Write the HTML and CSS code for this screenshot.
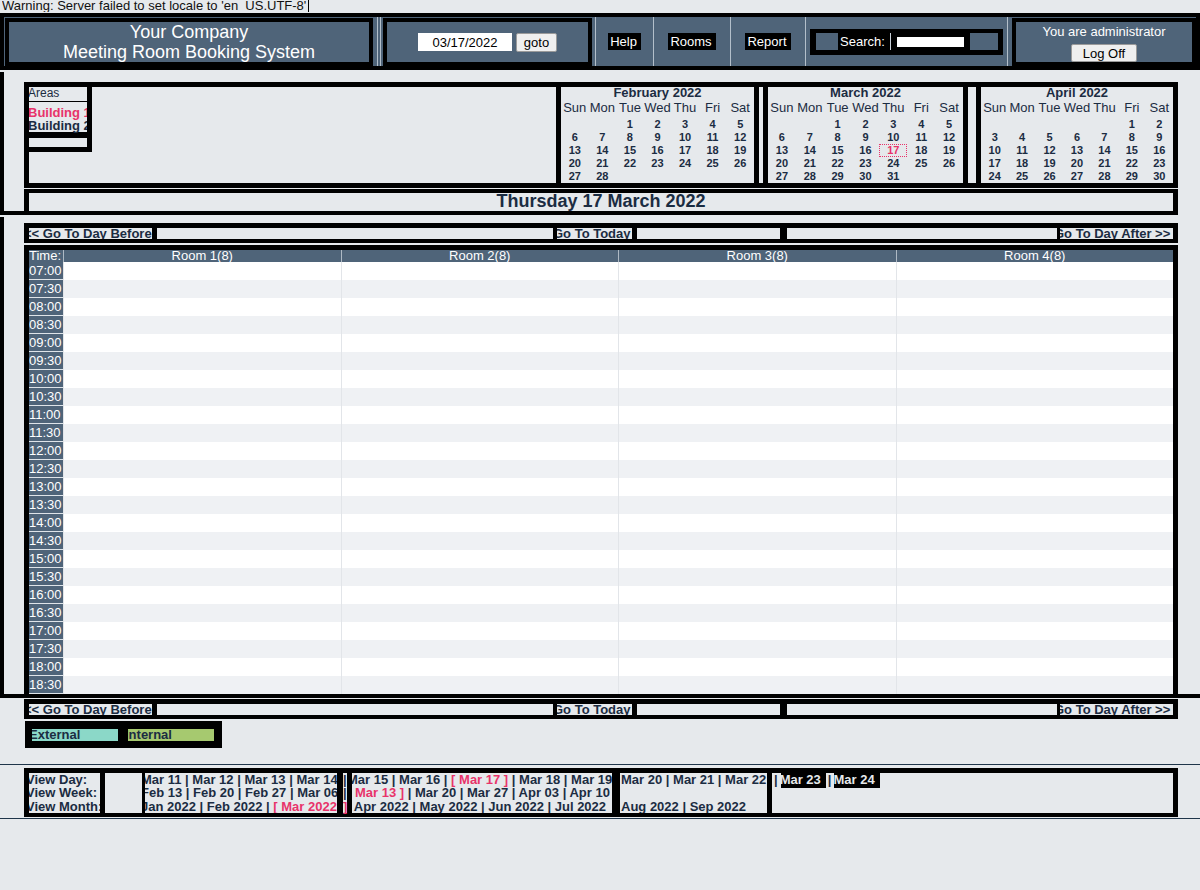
FILE: index.html
```html
<!DOCTYPE html>
<html>
<head>
<meta charset="utf-8">
<title>Meeting Room Booking System</title>
<link rel="stylesheet" href="styles.css">
</head>
<body>
<div class="warning"><span>Warning: Server failed to set locale to 'en_US.UTF-8'</span></div>
<div class="header">
  <div class="h-company"><div class="companybox">Your Company<br>Meeting Room Booking System</div></div>
  <div class="hline"></div><div class="hgap"></div><div class="hline"></div>
  <div class="h-date"><div class="datebox"><input class="dateinput" value="03/17/2022"><button class="btn goto">goto</button></div></div>
  <div class="hline"></div>
  <div class="h-link w57"><span class="navlabel">Help</span></div>
  <div class="hline"></div>
  <div class="h-link w76"><span class="navlabel">Rooms</span></div>
  <div class="hline"></div>
  <div class="h-link w74"><span class="navlabel">Report</span></div>
  <div class="hline"></div>
  <div class="h-search"><div class="searchbox"><span class="sq1"></span><span class="searchlabel">Search:</span><span class="sline"></span><span class="sinput"></span><span class="sq2"></span></div></div>
  <div class="hline"></div>
  <div class="h-admin"><div class="adminbox"><div class="admintext">You are administrator</div><button class="btn logoff">Log Off</button></div></div>
</div>

<div class="sec1">
  <div class="topbox">
    <div class="areas">
      <div class="areas-title">Areas</div>
      <div class="areas-list">
        <div class="area current">Building 1</div>
        <div class="area">Building 2</div>
      </div>
    </div>
    <div class="spacer"></div>
    <div class="cal feb">
      <div class="cal-title">February 2022</div>
      <div class="cal-wd"><span>Sun</span><span>Mon</span><span>Tue</span><span>Wed</span><span>Thu</span><span>Fri</span><span>Sat</span></div>
      <div class="cal-dates">
        <span></span><span></span><span>1</span><span>2</span><span>3</span><span>4</span><span>5</span>
        <span>6</span><span>7</span><span>8</span><span>9</span><span>10</span><span>11</span><span>12</span>
        <span>13</span><span>14</span><span>15</span><span>16</span><span>17</span><span>18</span><span>19</span>
        <span>20</span><span>21</span><span>22</span><span>23</span><span>24</span><span>25</span><span>26</span>
        <span>27</span><span>28</span>
      </div>
    </div>
    <div class="cal mar">
      <div class="cal-title">March 2022</div>
      <div class="cal-wd"><span>Sun</span><span>Mon</span><span>Tue</span><span>Wed</span><span>Thu</span><span>Fri</span><span>Sat</span></div>
      <div class="cal-dates">
        <span></span><span></span><span>1</span><span>2</span><span>3</span><span>4</span><span>5</span>
        <span>6</span><span>7</span><span>8</span><span>9</span><span>10</span><span>11</span><span>12</span>
        <span>13</span><span>14</span><span>15</span><span>16</span><span class="today">17</span><span>18</span><span>19</span>
        <span>20</span><span>21</span><span>22</span><span>23</span><span>24</span><span>25</span><span>26</span>
        <span>27</span><span>28</span><span>29</span><span>30</span><span>31</span>
      </div>
    </div>
    <div class="cal apr">
      <div class="cal-title">April 2022</div>
      <div class="cal-wd"><span>Sun</span><span>Mon</span><span>Tue</span><span>Wed</span><span>Thu</span><span>Fri</span><span>Sat</span></div>
      <div class="cal-dates">
        <span></span><span></span><span></span><span></span><span></span><span>1</span><span>2</span>
        <span>3</span><span>4</span><span>5</span><span>6</span><span>7</span><span>8</span><span>9</span>
        <span>10</span><span>11</span><span>12</span><span>13</span><span>14</span><span>15</span><span>16</span>
        <span>17</span><span>18</span><span>19</span><span>20</span><span>21</span><span>22</span><span>23</span>
        <span>24</span><span>25</span><span>26</span><span>27</span><span>28</span><span>29</span><span>30</span>
      </div>
    </div>
  </div>
  <div class="titlebox">Thursday 17 March 2022</div>
</div>

<div class="sec2">
  <div class="nav">
    <div class="nv before">&lt;&lt; Go To Day Before</div>
    <div class="nv fill1"></div>
    <div class="nv today-link">Go To Today</div>
    <div class="nv fill2"></div>
    <div class="nv fill3"></div>
    <div class="nv after">Go To Day After &gt;&gt;</div>
  </div>
  <div class="grid">
    <div class="ghead"><div class="gh time">Time:</div><div class="gh">Room 1(8)</div><div class="gh">Room 2(8)</div><div class="gh">Room 3(8)</div><div class="gh">Room 4(8)</div></div>
    <div class="trow"><div class="tcell">07:00</div><div class="rc"></div><div class="rc"></div><div class="rc"></div><div class="rc"></div></div>
    <div class="trow"><div class="tcell">07:30</div><div class="rc"></div><div class="rc"></div><div class="rc"></div><div class="rc"></div></div>
    <div class="trow"><div class="tcell">08:00</div><div class="rc"></div><div class="rc"></div><div class="rc"></div><div class="rc"></div></div>
    <div class="trow"><div class="tcell">08:30</div><div class="rc"></div><div class="rc"></div><div class="rc"></div><div class="rc"></div></div>
    <div class="trow"><div class="tcell">09:00</div><div class="rc"></div><div class="rc"></div><div class="rc"></div><div class="rc"></div></div>
    <div class="trow"><div class="tcell">09:30</div><div class="rc"></div><div class="rc"></div><div class="rc"></div><div class="rc"></div></div>
    <div class="trow"><div class="tcell">10:00</div><div class="rc"></div><div class="rc"></div><div class="rc"></div><div class="rc"></div></div>
    <div class="trow"><div class="tcell">10:30</div><div class="rc"></div><div class="rc"></div><div class="rc"></div><div class="rc"></div></div>
    <div class="trow"><div class="tcell">11:00</div><div class="rc"></div><div class="rc"></div><div class="rc"></div><div class="rc"></div></div>
    <div class="trow"><div class="tcell">11:30</div><div class="rc"></div><div class="rc"></div><div class="rc"></div><div class="rc"></div></div>
    <div class="trow"><div class="tcell">12:00</div><div class="rc"></div><div class="rc"></div><div class="rc"></div><div class="rc"></div></div>
    <div class="trow"><div class="tcell">12:30</div><div class="rc"></div><div class="rc"></div><div class="rc"></div><div class="rc"></div></div>
    <div class="trow"><div class="tcell">13:00</div><div class="rc"></div><div class="rc"></div><div class="rc"></div><div class="rc"></div></div>
    <div class="trow"><div class="tcell">13:30</div><div class="rc"></div><div class="rc"></div><div class="rc"></div><div class="rc"></div></div>
    <div class="trow"><div class="tcell">14:00</div><div class="rc"></div><div class="rc"></div><div class="rc"></div><div class="rc"></div></div>
    <div class="trow"><div class="tcell">14:30</div><div class="rc"></div><div class="rc"></div><div class="rc"></div><div class="rc"></div></div>
    <div class="trow"><div class="tcell">15:00</div><div class="rc"></div><div class="rc"></div><div class="rc"></div><div class="rc"></div></div>
    <div class="trow"><div class="tcell">15:30</div><div class="rc"></div><div class="rc"></div><div class="rc"></div><div class="rc"></div></div>
    <div class="trow"><div class="tcell">16:00</div><div class="rc"></div><div class="rc"></div><div class="rc"></div><div class="rc"></div></div>
    <div class="trow"><div class="tcell">16:30</div><div class="rc"></div><div class="rc"></div><div class="rc"></div><div class="rc"></div></div>
    <div class="trow"><div class="tcell">17:00</div><div class="rc"></div><div class="rc"></div><div class="rc"></div><div class="rc"></div></div>
    <div class="trow"><div class="tcell">17:30</div><div class="rc"></div><div class="rc"></div><div class="rc"></div><div class="rc"></div></div>
    <div class="trow"><div class="tcell">18:00</div><div class="rc"></div><div class="rc"></div><div class="rc"></div><div class="rc"></div></div>
    <div class="trow"><div class="tcell">18:30</div><div class="rc"></div><div class="rc"></div><div class="rc"></div><div class="rc"></div></div>
  </div>
</div>

<div class="nav nav2">
  <div class="nv before">&lt;&lt; Go To Day Before</div>
  <div class="nv fill1"></div>
  <div class="nv today-link">Go To Today</div>
  <div class="nv fill2"></div>
  <div class="nv fill3"></div>
  <div class="nv after">Go To Day After &gt;&gt;</div>
</div>

<div class="legend">
  <div class="leg ext">External</div>
  <div class="leg int">Internal</div>
</div>

<div class="footer">
  <div class="fbox">
    <div class="fc fa"><div class="l">View Day:</div><div class="l">View Week:</div><div class="l">View Month:</div></div>
    <div class="fc fb"></div>
    <div class="fc fcc"><div class="l">Mar 11 | Mar 12 | Mar 13 | Mar 14</div><div class="l">Feb 13 | Feb 20 | Feb 27 | Mar 06</div><div class="l">Jan 2022 | Feb 2022 | <span class="hl">[ Mar 2022 ]</span></div></div>
    <div class="fc fd"><div class="l">|</div><div class="l">|</div><div class="l hl">]</div></div>
    <div class="fc fe"><div class="l">Mar 15 | Mar 16 | <span class="hl">[ Mar 17 ]</span> | Mar 18 | Mar 19</div><div class="l"><span class="hl">[ Mar 13 ]</span> | Mar 20 | Mar 27 | Apr 03 | Apr 10</div><div class="l">| Apr 2022 | May 2022 | Jun 2022 | Jul 2022</div></div>
    <div class="fc ff"><div class="l">Mar 20 | Mar 21 | Mar 22</div><div class="l">&nbsp;</div><div class="l">Aug 2022 | Sep 2022</div></div>
    <div class="fc fg"><div class="l"><span class="pipe">|</span><span class="dlab">Mar 23</span><span class="pipe">|</span><span class="dlab">Mar 24</span></div></div>
  </div>
</div>
</body>
</html>
```
FILE: styles.css
```css
* { box-sizing: border-box; }
html, body { margin: 0; padding: 0; }
body {
  background: #e6e9ec;
  font-family: "Liberation Sans", Arial, sans-serif;
  color: #1b2c42;
  width: 1200px;
  height: 890px;
  overflow: hidden;
}

/* warning line */
.warning {
  height: 13px;
  line-height: 11px;
  font-size: 13px;
  color: #111;
  padding-left: 2px;
  overflow: hidden;
  white-space: nowrap;
}
.warning span {
  display: inline-block;
  height: 12px;
  overflow: hidden;
  vertical-align: top;
  border-right: 1px solid #000;
  padding-right: 2px;
}

/* header */
.header {
  display: flex;
  height: 57px;
  border: 4px solid #000;
  background: #4f6479;
  color: #fff;
}
.hline { width: 1px; flex: none; background: #b3bfca; }
.hgap { width: 2px; flex: none; }
.h-company { width: 373px; flex: none; padding: 1px 4px 0 1px; display: flex; }
.companybox {
  flex: 1;
  border: 4px solid #000;
  text-align: center;
  font-size: 18px;
  line-height: 20px;
}
.h-date { width: 214px; flex: none; padding: 1px 3px 0 2px; display: flex; }
.datebox {
  flex: 1;
  border: 4px solid #000;
  display: flex;
  align-items: center;
  justify-content: center;
  gap: 4px;
}
.dateinput {
  width: 94px;
  height: 18px;
  border: 0;
  padding: 0;
  margin: 0;
  background: #fff;
  font: 13px "Liberation Sans", Arial, sans-serif;
  color: #000;
  text-align: center;
  outline: none;
}
.btn {
  font-family: "Liberation Sans", Arial, sans-serif;
  font-size: 13px;
  color: #000;
  background: #efefef;
  border: 1px solid #9a9a9a;
  border-radius: 2px;
  padding: 0;
  margin: 0;
}
.goto { width: 41px; height: 19px; }
.h-link { flex: none; display: flex; align-items: center; justify-content: center; }
.w57 { width: 57px; }
.w76 { width: 76px; }
.w74 { width: 74px; }
.navlabel {
  background: #000;
  color: #fff;
  font-size: 13px;
  line-height: 13px;
  padding: 2px 4px 2px 2px;
  white-space: nowrap;
}
.h-search { width: 201px; flex: none; display: flex; align-items: center; padding: 0 4px; }
.searchbox {
  width: 193px;
  height: 26px;
  background: #000;
  display: flex;
  align-items: center;
  padding-left: 6px;
}
.sq1 { width: 22px; height: 17px; background: #4f6479; flex: none; }
.searchlabel { margin-left: 2px; width: 45px; font-size: 13px; line-height: 13px; color: #fff; white-space: nowrap; overflow: hidden; flex: none; }
.sline { margin-left: 5px; width: 1px; height: 17px; background: #c9d1d9; flex: none; }
.sinput { margin-left: 6px; width: 67px; height: 10px; background: #fff; flex: none; }
.sq2 { margin-left: 6px; width: 28px; height: 17px; background: #4f6479; flex: none; }
.h-admin { width: 188px; flex: none; padding: 1px 0 0 4px; display: flex; }
.adminbox {
  flex: 1;
  border: 4px solid #000;
  text-align: center;
  padding-top: 2px;
}
.admintext { font-size: 13px; line-height: 16px; color: #fff; }
.logoff { width: 66px; height: 18px; display: block; margin: 4px auto 0; }

/* section 1: areas + calendars */
.sec1 {
  margin-top: 2px;
  width: 1178px;
  border-left: 4px solid #000;
  border-bottom: 4px solid #000;
  padding: 10px 0 0 20px;
}
.topbox {
  display: flex;
  height: 106px;
  border: 5px solid #000;
}
.areas {
  width: 63px;
  height: 65px;
  flex: none;
  border-right: 5px solid #000;
  border-bottom: 5px solid #000;
  overflow: hidden;
}
.areas-title {
  height: 15px;
  font-size: 12px;
  line-height: 12px;
  border-bottom: 1px solid #000;
  text-indent: -1px;
  white-space: nowrap;
}
.areas-list {
  margin-top: 4px;
  border-bottom: 6px solid #000;
}
.area {
  font-weight: bold;
  font-size: 13px;
  line-height: 13px;
  white-space: nowrap;
  text-indent: -1px;
}
.area.current { color: #e8336a; }
.spacer { flex: 1; }
.cal {
  flex: none;
  height: 96px;
  border-left: 5px solid #000;
  border-right: 5px solid #000;
  overflow: hidden;
}
.cal.feb { width: 203px; margin-right: 4px; }
.cal.mar { width: 205px; margin-right: 8px; }
.cal.apr { width: 197px; border-right: 0; }
.cal-title {
  height: 11px;
  font-weight: bold;
  font-size: 13px;
  line-height: 11px;
  text-align: center;
  white-space: nowrap;
}
.cal-wd {
  display: grid;
  grid-template-columns: repeat(7, 1fr);
  font-size: 13px;
  line-height: 20px;
  height: 20px;
  text-align: center;
  white-space: nowrap;
}
.cal-dates {
  display: grid;
  grid-template-columns: repeat(7, 1fr);
  grid-auto-rows: 13px;
  font-weight: bold;
  font-size: 11px;
  line-height: 13px;
  text-align: center;
}
.cal-dates .today {
  color: #e8336a;
  border: 1px dotted #e8336a;
  line-height: 11px;
}
.titlebox {
  margin-top: 1px;
  height: 22px;
  border: solid #000;
  border-width: 4px 5px 0;
  text-align: center;
  font-weight: bold;
  font-size: 18px;
  line-height: 17px;
}

/* section 2: day grid */
.sec2 {
  margin-top: 2px;
  border-left: 4px solid #000;
  border-bottom: 4px solid #000;
  padding: 6px 0 0 20px;
}
.nav {
  width: 1154px;
  height: 20px;
  background: #000;
  padding: 5px 5px 4px;
  display: flex;
  font-weight: bold;
  font-size: 13px;
  line-height: 11px;
}
.nav2 { margin-left: 24px; margin-top: 1px; }
.nv {
  background: #e6e9ec;
  height: 11px;
  overflow: hidden;
  white-space: nowrap;
  flex: none;
}
.nv.before { width: 123px; text-indent: -5px; }
.nv.fill1 { width: 396px; margin-left: 5px; }
.nv.today-link { width: 75px; margin-left: 4px; text-indent: -4px; }
.nv.fill2 { width: 143px; margin-left: 5px; }
.nv.fill3 { width: 270px; margin-left: 7px; }
.nv.after { flex: 1; margin-left: 3px; text-indent: -6px; }

.grid {
  width: 1154px;
  margin-top: 2px;
  border: 5px solid #000;
  border-bottom: 0;
}
.ghead {
  display: grid;
  grid-template-columns: 34px repeat(4, 1fr);
  height: 12px;
  background: #4f6479;
  color: #fff;
  font-size: 13px;
  line-height: 12px;
}
.gh {
  text-align: center;
  overflow: hidden;
  white-space: nowrap;
  border-left: 1px solid #aeb9c4;
}
.gh.time { text-align: left; border-left: 0; }
.trow {
  display: grid;
  grid-template-columns: 34px repeat(4, 1fr);
  height: 18px;
  background: #fff;
}
.trow:nth-child(odd) { background: #eff1f4; }
.tcell {
  background: #4f6479;
  color: #fff;
  font-size: 13px;
  line-height: 17px;
  height: 18px;
  border-bottom: 1px solid #dfe4e9;
  overflow: hidden;
  white-space: nowrap;
}
.rc { border-left: 1px solid #e2e5e9; }

/* legend */
.legend {
  width: 197px;
  margin: 2px 0 0 25px;
  display: flex;
  gap: 10px;
  background: #000;
  padding: 8px 8px 7px 7px;
}
.leg {
  width: 86px;
  height: 12px;
  line-height: 12px;
  font-weight: bold;
  font-size: 13px;
  overflow: hidden;
  white-space: nowrap;
  text-indent: -3px;
}
.leg.ext { background: #8bd8c8; }
.leg.int { background: #a6c96f; }

/* footer */
.footer {
  margin-top: 16px;
  border-top: 1px solid #1f354a;
  border-bottom: 1px solid #1f354a;
  padding: 3px 0 1px 24px;
}
.fbox {
  width: 1154px;
  height: 49px;
  background: #000;
  padding: 5px 5px 4px;
  display: flex;
  font-weight: bold;
  font-size: 13px;
  line-height: 13.3px;
}
.fc {
  background: #e6e9ec;
  overflow: hidden;
  white-space: nowrap;
  flex: none;
}
.fc .l { height: 13.3px; }
.fa { width: 71px; }
.fa .l { margin-left: -3px; }
.fb { width: 37px; margin-left: 5px; }
.fcc { width: 192px; margin-left: 3px; }
.fcc .l { margin-left: -4px; }
.fd { width: 4px; margin-left: 6px; overflow: visible; }
.fe { width: 260px; margin-left: 5px; }
.fe .l { margin-left: -5px; }
.ff { width: 147px; margin-left: 8px; }
.ff .l { margin-left: 1px; }
.fg { flex: 1; margin-left: 5px; }
.hl { color: #e8336a; }
.pipe { margin: 0 3px 0 2px; }
.dlab {
  display: inline-block;
  background: #000;
  color: #e6e9ec;
  height: 15px;
  line-height: 14px;
  padding: 0 5px 0 0;
  text-indent: -1px;
  vertical-align: top;
}
```
